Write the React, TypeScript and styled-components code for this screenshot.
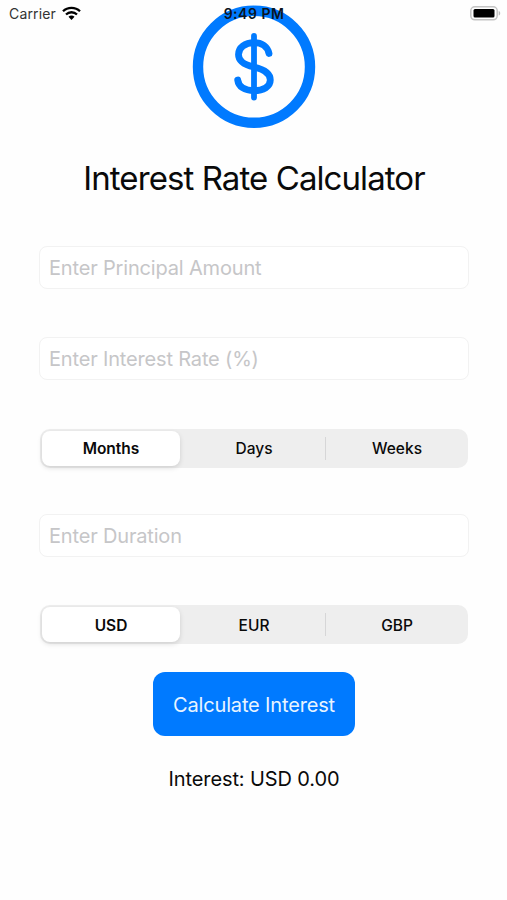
import React, { useState } from "react";
import styled, { createGlobalStyle } from "styled-components";

const GlobalStyle = createGlobalStyle`
  *, *::before, *::after { box-sizing: border-box; }
  body {
    margin: 0;
    background: #fefefe;
    color: #0a0a0a;
    font-family: Inter, "Liberation Sans", sans-serif;
  }
  button, input { font-family: inherit; color: inherit; margin: 0; }
`;

const Screen = styled.div`
  position: relative;
  width: 507px;
  height: 900px;
  padding: 5px 38px 0 39px;
  display: flex;
  flex-direction: column;
  align-items: center;
  overflow: hidden;
`;

const StatusBar = styled.header`
  position: absolute;
  top: 0;
  left: 0;
  right: 0;
  height: 27px;
  padding: 0 6px 0 9px;
  display: grid;
  grid-template-columns: 1fr auto 1fr;
  align-items: center;
`;

const Carrier = styled.span`
  display: flex;
  align-items: center;
  gap: 6px;
  font-size: 14px;
  letter-spacing: 0.15px;
  color: #333;
`;

const Time = styled.span`
  margin-right: 2px;
  font-size: 14px;
  font-weight: 600;
  letter-spacing: 0.5px;
  color: #0b1320;
`;

const Battery = styled.svg`
  justify-self: end;
`;

const Logo = styled.svg`
  display: block;
  flex: none;
`;

const Title = styled.h1`
  margin: 28px 0 0;
  height: 42px;
  line-height: 42px;
  font-size: 33px;
  font-weight: 400;
  letter-spacing: -0.92px;
  white-space: nowrap;
`;

const Field = styled.input<{ $gap: number }>`
  flex: none;
  width: 430px;
  height: 43px;
  margin-top: ${(p) => p.$gap}px;
  padding: 1px 9px 0;
  border: 1.5px solid #f2f2f2;
  border-radius: 8px;
  background: #fff;
  font-size: 20px;
  letter-spacing: -0.17px;
  outline: none;
  &::placeholder { color: #c6c6c8; opacity: 1; }
`;

const Segments = styled.div<{ $gap: number }>`
  flex: none;
  width: 428px;
  height: 39px;
  margin-top: ${(p) => p.$gap}px;
  padding: 2px;
  display: grid;
  grid-template-columns: 138px 1fr 140px;
  border-radius: 10px;
  background: #eee;
`;

const Segment = styled.button<{ $active: boolean; $divided: boolean; $drop: number }>`
  position: relative;
  padding: ${(p) => p.$drop}px 0 0 ${(p) => (p.$active ? 0 : 2)}px;
  border: 0;
  border-radius: 8px;
  background: ${(p) => (p.$active ? "#fff" : "transparent")};
  box-shadow: ${(p) => (p.$active ? "0 2px 5px rgba(0, 0, 0, 0.13)" : "none")};
  font-size: 15.5px;
  font-weight: ${(p) => (p.$active ? 600 : 500)};
  &::before {
    content: "";
    display: ${(p) => (p.$divided ? "block" : "none")};
    position: absolute;
    left: -1px;
    top: 6px;
    bottom: 6px;
    width: 1px;
    background: #d6d6d7;
  }
`;

const CalculateButton = styled.button`
  flex: none;
  width: 202px;
  height: 64px;
  margin-top: 28px;
  padding: 2px 0 0;
  border: 0;
  border-radius: 12px;
  background: #007aff;
  color: #e8f4ff;
  font-size: 20px;
  letter-spacing: -0.16px;
  white-space: nowrap;
`;

const Result = styled.p`
  margin: 29px 0 0;
  height: 28px;
  line-height: 28px;
  font-size: 20px;
  letter-spacing: -0.12px;
  white-space: nowrap;
`;

const PERIODS = ["Months", "Days", "Weeks"];
const CURRENCIES = ["USD", "EUR", "GBP"];
const PERIODS_PER_YEAR: Record<string, number> = { Months: 12, Days: 365, Weeks: 52 };

interface PickerProps {
  options: string[];
  value: string;
  gap: number;
  drop?: number;
  onChange: (value: string) => void;
}

function Picker({ options, value, gap, drop = 0, onChange }: PickerProps) {
  const selected = options.indexOf(value);
  return (
    <Segments $gap={gap}>
      {options.map((option, i) => (
        <Segment
          key={option}
          $active={i === selected}
          $divided={i > 0 && i !== selected && i - 1 !== selected}
          $drop={drop}
          onClick={() => onChange(option)}
        >
          {option}
        </Segment>
      ))}
    </Segments>
  );
}

export default function App() {
  const [principal, setPrincipal] = useState("");
  const [rate, setRate] = useState("");
  const [duration, setDuration] = useState("");
  const [period, setPeriod] = useState("Months");
  const [currency, setCurrency] = useState("USD");
  const [interest, setInterest] = useState(0);

  const calculate = () => {
    const years = (Number(duration) || 0) / PERIODS_PER_YEAR[period];
    setInterest(((Number(principal) || 0) * (Number(rate) || 0) * years) / 100);
  };

  return (
    <>
      <GlobalStyle />
      <Screen>
        <Logo width="124" height="124" viewBox="0 0 124 124" fill="none" stroke="#007aff">
          <circle cx="62" cy="61.8" r="56" strokeWidth="10.4" />
          <g strokeLinecap="round">
            <path strokeWidth="5.8" d="M62 31V92.500" />
            <path strokeWidth="6.800" d="M77 48.500C75.500 41.500 70 37.700 62 37.700C53 37.700 46.500 42.500 46.500 49.500C46.500 56 51 59.500 62 62C73 64.500 78.300 68.500 78.300 75C78.300 81.500 71.500 85.700 62 85.700C52.500 85.700 46.500 81.500 45.700 75" />
          </g>
        </Logo>
        <StatusBar>
          <Carrier>
            Carrier
            <svg width="19" height="15" viewBox="0 0 19 15" fill="none" stroke="#000" strokeWidth="2.3">
              <path d="M1 5.300C5.700.700 13.300.700 18 5.300" />
              <path d="M4 8.500C7.100 5.500 11.900 5.500 15 8.500" />
              <path d="M6.500 10.700C8.200 9.100 10.800 9.100 12.500 10.700L9.500 14Z" fill="#000" stroke="none" />
            </svg>
          </Carrier>
          <Time>9:49 PM</Time>
          <Battery width="31" height="15" viewBox="0 0 31 15">
            <rect x="0.8" y="0.8" width="26.400" height="13" rx="4" fill="#fff" stroke="#c4c4c4" strokeWidth="1.5" />
            <rect x="3.500" y="3" width="21" height="8.600" rx="1.500" fill="#000" />
            <path d="M28.700 5V9.600C30.700 8.900 30.700 5.700 28.700 5Z" fill="#bbb" />
          </Battery>
        </StatusBar>
        <Title>Interest Rate Calculator</Title>
        <Field $gap={47} placeholder="Enter Principal Amount" value={principal} onChange={(e) => setPrincipal(e.target.value)} />
        <Field $gap={48} placeholder="Enter Interest Rate (%)" value={rate} onChange={(e) => setRate(e.target.value)} />
        <Picker gap={49} options={PERIODS} value={period} onChange={setPeriod} />
        <Field $gap={46} placeholder="Enter Duration" value={duration} onChange={(e) => setDuration(e.target.value)} />
        <Picker gap={48} drop={2} options={CURRENCIES} value={currency} onChange={setCurrency} />
        <CalculateButton onClick={calculate}>Calculate Interest</CalculateButton>
        <Result>
          Interest: {currency} {interest.toFixed(2)}
        </Result>
      </Screen>
    </>
  );
}
